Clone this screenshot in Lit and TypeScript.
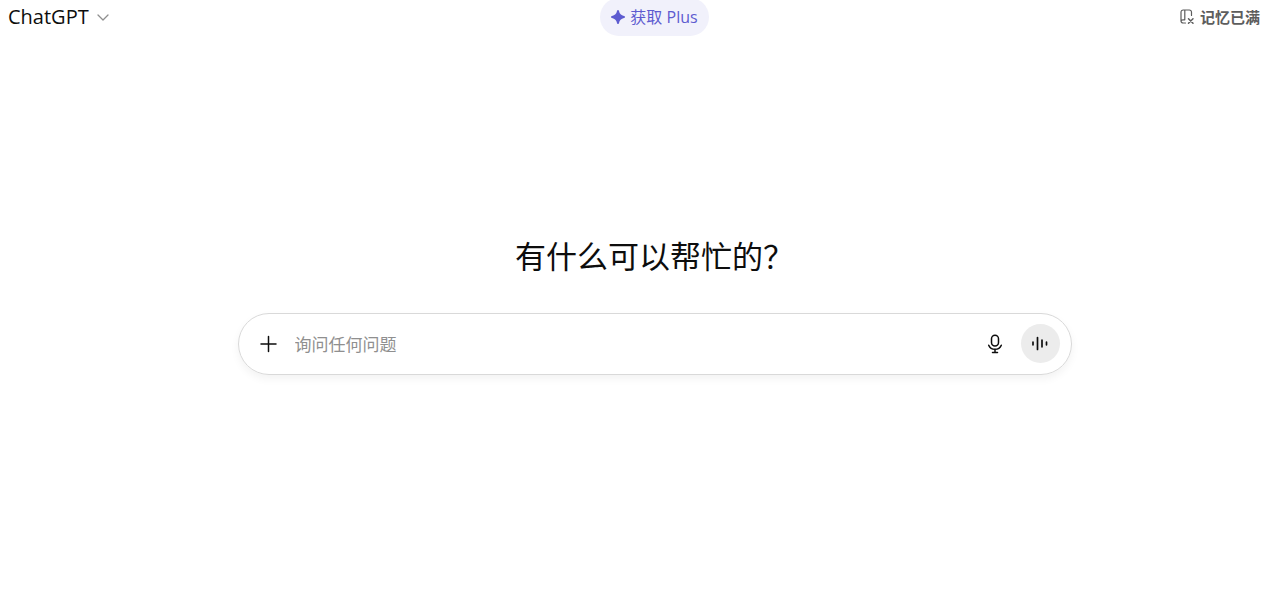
import { LitElement, html, css } from "lit";
import { customElement, state } from "lit/decorators.js";

@customElement("app-root")
export class AppRoot extends LitElement {
  static styles = css`
    :host {
      display: flex;
      flex-direction: column;
      min-height: 100vh;
      background: #fff;
      color: #0d0d0d;
      font-family: "Noto Sans", "Noto Sans CJK SC", sans-serif;
      overflow: hidden;
    }
    * {
      box-sizing: border-box;
    }
    button {
      display: inline-flex;
      align-items: center;
      padding: 0;
      border: 0;
      background: none;
      color: inherit;
      font: inherit;
      cursor: pointer;
    }
    svg {
      display: block;
      flex: none;
    }
    .bar {
      display: grid;
      grid-template-columns: 1fr auto 1fr;
      align-items: center;
      margin-top: -2px;
      padding: 0 20px 0 8px;
    }
    .bar > :last-child {
      justify-self: end;
    }
    .center {
      display: flex;
      padding-left: 41px;
    }
    .model {
      justify-self: start;
      gap: 8px;
      font-family: "Open Sans", "Noto Sans", sans-serif;
      font-size: 20px;
      line-height: 28px;
    }
    .plus {
      gap: 5px;
      height: 38px;
      padding: 0 11px;
      border-radius: 19px;
      background: #f1f1fb;
      color: #5d5bd0;
      font-family: "Open Sans", "Noto Sans CJK SC", sans-serif;
      font-size: 16px;
      line-height: 24px;
    }
    .memory {
      gap: 5px;
      color: #5d5d5d;
      font-family: "Noto Sans CJK SC", sans-serif;
      font-size: 15px;
      font-weight: 700;
      line-height: 20px;
    }
    main {
      display: flex;
      flex-direction: column;
      align-items: center;
      padding: 197px 0 0 29px;
    }
    h1 {
      margin: 0 0 36px;
      font-family: "Noto Sans CJK SC", sans-serif;
      font-size: 31px;
      font-weight: 400;
      line-height: 44px;
    }
    .composer {
      display: flex;
      align-items: center;
      width: 100%;
      max-width: 834px;
      height: 62px;
      padding: 0 11px 1px 19px;
      border: 1px solid #d9d9d9;
      border-radius: 31px;
      box-shadow: 0 4px 8px rgba(0, 0, 0, 0.05);
    }
    .field {
      flex: 1;
      min-width: 0;
      margin: 0 16px;
      padding: 0;
      border: 0;
      outline: 0;
      background: none;
      color: inherit;
      font-family: "Noto Sans CJK SC", sans-serif;
      font-size: 17px;
      line-height: 28px;
    }
    .field::placeholder {
      color: #8f8f8f;
      opacity: 1;
    }
    .voice {
      justify-content: center;
      width: 39px;
      height: 39px;
      margin-left: 15px;
      border-radius: 50%;
      background: #ececec;
    }
  `;

  @state() private prompt = "";

  render() {
    return html`
      <header class="bar">
        <button class="model" type="button" aria-haspopup="menu">
          ChatGPT
          <svg width="12" height="12" viewBox="0 0 12 12" fill="none" stroke="#8f8f8f" stroke-width="1.3" stroke-linecap="round" stroke-linejoin="round">
            <path d="M1 4l5 5 5-5" />
          </svg>
        </button>
        <div class="center">
          <button class="plus" type="button">
            <svg width="14" height="14" viewBox="0 0 14 14" fill="currentColor">
              <path d="M7 0C7.6 0 7.8.4 8 1c.7 3 2 4.300 5 5 .6.2 1 .4 1 1s-.4.800-1 1c-3 .7-4.300 2-5 5-.2.600-.4 1-1 1s-.8-.4-1-1C5.300 10 4 8.700 1 8 .4 7.800 0 7.600 0 7s.4-.8 1-1c3-.7 4.300-2 5-5 .2-.6.4-1 1-1z" />
            </svg>
            获取 Plus
          </button>
        </div>
        <button class="memory" type="button">
          <svg width="15" height="16" viewBox="0 0 15 16" fill="none" stroke="currentColor" stroke-width="1.2" stroke-linecap="round">
            <path d="M11.500 6.500V3.200C11.500 1.800 10.700 1 9.300 1H3.200C1.800 1 1 1.800 1 3.200v8.600C1 13.200 1.800 14 3.200 14H5.500M4.800 1v9.500M4.800 10.800H3C1.700 10.800 1 11.400 1 12.200" />
            <path stroke-width="1.500" d="M8.500 9.800l4.500 4.500M13 9.800l-4.500 4.500" />
          </svg>
          记忆已满
        </button>
      </header>
      <main>
        <h1>有什么可以帮忙的？</h1>
        <form class="composer" @submit=${(e: Event) => e.preventDefault()}>
          <button type="button" aria-label="添加">
            <svg width="21" height="20" viewBox="0 0 21 20" fill="none" stroke="#0d0d0d" stroke-width="1.5" stroke-linecap="round">
              <path d="M10.500 2.500v15M3 10h15" />
            </svg>
          </button>
          <input
            class="field"
            type="text"
            aria-label="询问任何问题"
            placeholder="询问任何问题"
            .value=${this.prompt}
            @input=${(e: Event) => (this.prompt = (e.target as HTMLInputElement).value)}
          />
          <button type="button" aria-label="听写">
            <svg width="22" height="20" viewBox="0 0 22 20" fill="none" stroke="#0d0d0d" stroke-width="1.5" stroke-linecap="round">
              <rect x="7.500" y="1.200" width="7" height="10.800" rx="3.500" />
              <path d="M4.700 11.200c1 2.500 3.300 4.100 6.300 4.100s5.300-1.600 6.300-4.100M11 15.300v3M8.500 18.500h5" />
            </svg>
          </button>
          <button class="voice" type="button" aria-label="语音模式">
            <svg width="18" height="15" viewBox="0 0 18 15" fill="none" stroke="#0d0d0d" stroke-width="1.700" stroke-linecap="round">
              <path d="M2 6.200v2.600M6.500 1.500v12M11 4.200v6.600M15.500 6.200v2.600" />
            </svg>
          </button>
        </form>
      </main>
    `;
  }
}
